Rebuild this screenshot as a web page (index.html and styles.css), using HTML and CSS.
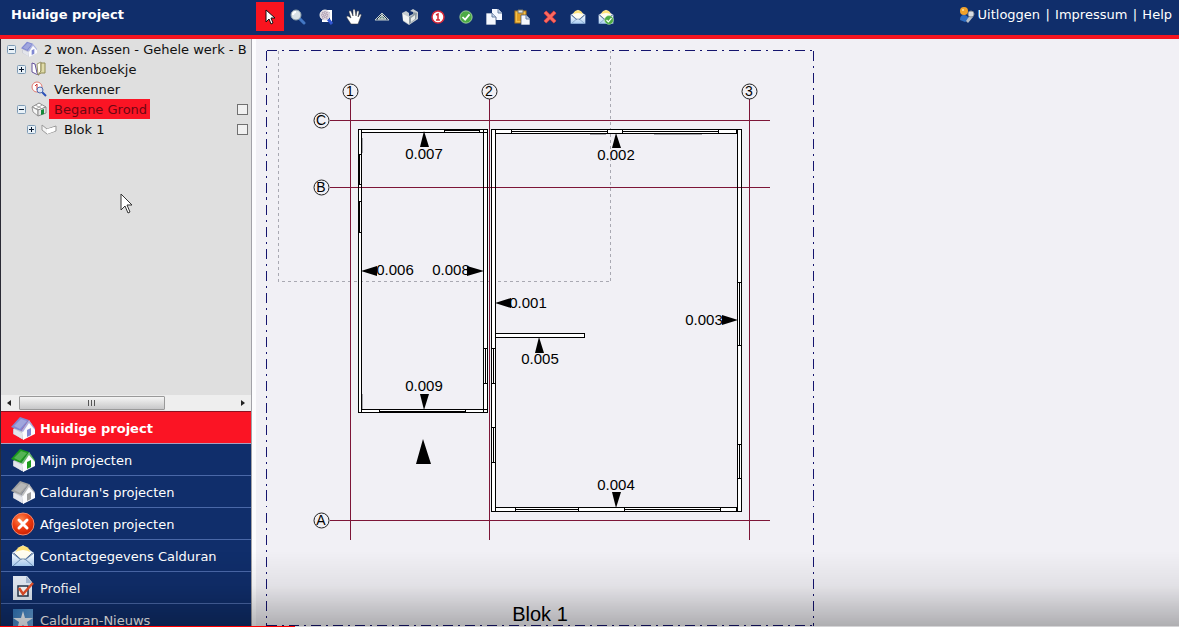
FILE: index.html
```html
<!DOCTYPE html>
<html lang="nl">
<head>
<meta charset="utf-8">
<title>Huidige project</title>
<link rel="stylesheet" href="styles.css">
</head>
<body>
<svg class="defs" aria-hidden="true">
  <defs>
    <linearGradient id="env" x1="0" y1="0" x2="0" y2="1"><stop offset="0" stop-color="#fff"/><stop offset="1" stop-color="#a9cdf3"/></linearGradient>
    <radialGradient id="redball" cx=".4" cy=".3" r=".8"><stop offset="0" stop-color="#ff8a50"/><stop offset=".5" stop-color="#f03c10"/><stop offset="1" stop-color="#c01800"/></radialGradient>
    <linearGradient id="star" x1="0" y1="0" x2="1" y2="1"><stop offset="0" stop-color="#2f74b8"/><stop offset="1" stop-color="#7db4e6"/></linearGradient>
    <symbol id="house" viewBox="0 0 24 24">
      <path d="M2 13l3-2 8 5v8L2 18z" fill="#c4c7d2"/>
      <path d="M3 13l8 4v6l-8-5z" fill="#e3e5ec"/>
      <path d="M11 14l7-10 6 9v5l-12 6z" fill="#fbfbfd"/>
      <path d="M0 11L9 1l9 3-8 11z" fill="currentColor"/>
      <path d="M3 10l7-7 6 2-7 8z" fill="#fff" opacity=".25"/>
      <path d="M18 4l6 8v2l-6-7-6 9-2-1z" fill="currentColor" opacity=".65"/>
      <path d="M16 14l4-2v7l-4 2z" fill="currentColor"/>
    </symbol>
    <symbol id="mail" viewBox="0 0 24 24">
      <path d="M1 9l11-8 11 8z" fill="#dfe8f4"/>
      <path d="M5 8q1-6 7-6t7 6l-5 5h-4z" fill="#ffe27a"/>
      <path d="M3 9q9-6 18 0l-9 8z" fill="#fffdf0"/>
      <path d="M1 9h1l8 7h4l8-7h1v13H1z" fill="url(#env)"/>
      <path d="M2 22l8-7h4l8 7M1 9l9 7M23 9l-9 7" fill="none" stroke="#6f92b8"/>
    </symbol>
    <symbol id="check" viewBox="0 0 16 16">
      <circle cx="8" cy="8" r="7" fill="#4dab45" stroke="#a9dca0"/>
      <path d="M4 8l3 3 5-6" fill="none" stroke="#fff" stroke-width="2"/>
    </symbol>
    <symbol id="page" viewBox="0 0 10 11">
      <path d="M0 0h6l4 4v7H0z" fill="#f4f8ff"/><path d="M6 0v4h4" fill="#c3d3e8" stroke="#6880a4"/>
    </symbol>
    <symbol id="plus" viewBox="0 0 9 9"><rect x=".5" y=".5" width="8" height="8" rx="1" fill="#e8f1f8" stroke="#7e9bb5"/><path d="M2 4h5v1H2zM4 2h1v5H4z" fill="#0a1a30"/></symbol>
    <symbol id="minus" viewBox="0 0 9 9"><rect x=".5" y=".5" width="8" height="8" rx="1" fill="#e8f1f8" stroke="#7e9bb5"/><path d="M2 4h5v1H2z" fill="#0a1a30"/></symbol>
  </defs>
</svg>

<header class="topbar">
  <h1 class="topbar-title">Huidige project</h1>
  <div class="toolbar" role="toolbar" aria-label="Gereedschap">
    <button class="tool tool-active" aria-label="Selecteren"><svg viewBox="0 0 16 16"><path d="M4 1v12l3-3 2 5 2-1-2-5h4z" fill="#fff" stroke="#111"/></svg></button>
    <button class="tool" aria-label="Zoomen"><svg viewBox="0 0 16 16"><path d="M10 10l4 4" stroke="#4377c4" stroke-width="3" stroke-linecap="round"/><circle cx="6" cy="6" r="5" fill="#d9e2e6" stroke="#8fa2ad"/><path d="M3 6q0-3 3-3" fill="none" stroke="#fff" stroke-width="2"/></svg></button>
    <button class="tool" aria-label="Zoom venster"><svg viewBox="0 0 16 16"><path d="M9 2h4v10H4" fill="none" stroke="#fff" stroke-width="2"/><path d="M10 10l4 5" stroke="#3155d2" stroke-width="3"/><circle cx="7" cy="6" r="5" fill="#dcd0dc" stroke="#eee"/><path d="M4 4h6M3 6h8M4 8h6M5 3v7M7 2v8M9 3v7" stroke="#a59aaa" stroke-dasharray="1 1"/></svg></button>
    <button class="tool" aria-label="Verschuiven"><svg viewBox="0 0 16 16"><path d="M5 15l-4-6q-1-2 1-2l3 2-2-6q0-2 2-1l2 5V1q1-2 2 0l1 6 1-5q2-1 2 1l-1 5 2-3q2 0 1 2l-3 8z" fill="#fff" stroke="#333" stroke-width=".5"/></svg></button>
    <button class="tool" aria-label="Aanzicht"><svg viewBox="0 0 16 16"><path d="M1 11L8 4l7 7z" fill="#142b50" stroke="#c3cfcf"/><path d="M4 10l4-4 4 4zM8 5v5" fill="#53777a" stroke="#dde5d8"/></svg></button>
    <button class="tool" aria-label="3D model"><svg viewBox="0 0 16 16"><path d="M0 4l4-2 3 2v3l4-2V3L8 2l3-2 5 3v7l-9 6-6-4z" fill="#c6cdd0"/><path d="M1 5l6 3v7l-6-4z" fill="#f3f5f3"/><path d="M7 8l4-2V3l4 1-1 6-7 5z" fill="#8d9ba3"/><path d="M9 9l4-3v4l-4 3z" fill="#e8ecea"/></svg></button>
    <button class="tool" aria-label="Maatvoering"><svg viewBox="0 0 16 16"><circle cx="8" cy="8" r="6" fill="#fff" stroke="#d8293a" stroke-width="1.5"/><path d="M6 6l2-1v6M6 11h4" fill="none" stroke="#d32b31" stroke-width="1.5"/></svg></button>
    <button class="tool" aria-label="Akkoord"><svg><use href="#check" x="1" y="1" width="14" height="14"/></svg></button>
    <button class="tool" aria-label="Kopiëren"><svg viewBox="0 0 16 16"><use href="#page" x="6" y="0" width="10" height="11"/><path d="M0 4h6l4 4v8H0z" fill="#f4f8ff" stroke="#183468" stroke-width=".7"/><path d="M6 4v4h4" fill="#c3d3e8" stroke="#6880a4"/></svg></button>
    <button class="tool" aria-label="Plakken"><svg viewBox="0 0 16 16"><rect x="1" y="2" width="11" height="12" fill="#f4c14a" stroke="#b47716"/><path d="M3 4h7v8H3z" fill="#e09d23"/><path d="M4 1h5v3H4z" fill="#e3e6ea" stroke="#776"/><path d="M7 6h5l4 4v6H7z" fill="#f4f8ff" stroke="#34486b" stroke-width=".7"/><path d="M12 6v4h4" fill="#c3d3e8" stroke="#6880a4"/></svg></button>
    <button class="tool" aria-label="Verwijderen"><svg viewBox="0 0 16 16"><path d="M3 3l10 10M13 3L3 13" stroke="#b71f2c" stroke-width="4"/><path d="M3 3l10 10M13 3L3 13" stroke="#fa6a60" stroke-width="3"/></svg></button>
    <button class="tool" aria-label="Bericht"><svg><use href="#mail"/></svg></button>
    <button class="tool" aria-label="Bericht verzonden"><svg viewBox="0 0 16 16"><use href="#mail" width="16" height="16"/><use href="#check" x="6" y="6" width="10" height="10"/></svg></button>
  </div>
  <nav class="account">
    <svg class="icon16" viewBox="0 0 16 16" aria-hidden="true"><path d="M1 13q0-5 4-5t5 5l-4 2z" fill="#2e6cc0"/><circle cx="5" cy="4" r="4" fill="#f0a22c"/><circle cx="4" cy="3" r="1" fill="#ffe09a"/><path d="M11 8l-4 6 2 2 5-6z" fill="#b9bfc6"/><circle cx="12" cy="7" r="3" fill="#d9dde2" stroke="#8a9098"/></svg>
    <a href="#">Uitloggen</a><span>|</span><a href="#">Impressum</a><span>|</span><a href="#">Help</a>
  </nav>
</header>

<main class="workspace">
  <aside class="sidebar">
    <div class="tree-panel">
      <ul class="tree">
        <li class="node level-1"><svg class="toggle"><use href="#minus"/></svg><svg class="icon16 house-blue"><use href="#house"/></svg><span class="label">2 won. Assen - Gehele werk - B</span></li>
        <li class="node level-2"><svg class="toggle"><use href="#plus"/></svg><svg class="icon16" viewBox="0 0 16 16"><path d="M1 2l3 1 2 9 2 2-3-1-4-2z" fill="#fff" stroke="#65529a"/><path d="M6 3l4-2v10l-3 3z" fill="#fffef0" stroke="#9b9570"/><path d="M10 2h4v10h-4l-3 2 3-4z" fill="#e0dba9" stroke="#8f8a54"/></svg><span class="label label-book">Tekenboekje</span></li>
        <li class="node level-2"><span class="toggle"></span><svg class="icon16" viewBox="0 0 16 16"><circle cx="6" cy="6" r="5" fill="#fff" stroke="#e07a72"/><path d="M4 5l2-2v6" fill="none" stroke="#d0302c"/><path d="M11 11l4 4" stroke="#2a50b8" stroke-width="2"/><circle cx="9" cy="9" r="3" fill="#dbe8fb" fill-opacity=".8" stroke="#4d6bb0"/></svg><span class="label">Verkenner</span></li>
        <li class="node level-2"><svg class="toggle"><use href="#minus"/></svg><svg class="icon16" viewBox="0 0 16 16"><path d="M1 6l7-4 7 4-7 3z" fill="#fff" stroke="#8b8b8b"/><path d="M1 6l6 3v6l-5-4z" fill="#f6f6f6" stroke="#999"/><path d="M7 9l8-3v6l-8 3z" fill="#e5e5e5" stroke="#8d8d8d"/><path d="M4 4l6 3M11 4L5 8" stroke="#aaa"/><path d="M10 9l3-1v5l-3 1z" fill="#15893a"/></svg><label class="label label-selected" for="pick-floor">Begane Grond</label><input class="pick" type="checkbox" id="pick-floor"></li>
        <li class="node level-3"><svg class="toggle"><use href="#plus"/></svg><svg class="icon16" viewBox="0 0 16 16"><path d="M1 4l5 4 9-3v5l-9 3-5-4z" fill="#f4f4f4" stroke="#9a9a9a"/><path d="M6 8v5l8-3V6z" fill="#fff"/></svg><label class="label" for="pick-block">Blok 1</label><input class="pick" type="checkbox" id="pick-block"></li>
      </ul>
      <svg class="pointer" viewBox="0 0 13 21" aria-hidden="true"><path d="M1 1v16l4-4 3 7 2-1-3-7h5z" fill="#fff" stroke="#333"/></svg>
    </div>
    <div class="scrollbar" aria-hidden="true">
      <svg class="scroll-arrow" viewBox="0 0 4 6"><path d="M4 0v6L0 3z"/></svg>
      <div class="scroll-track"><div class="scroll-thumb"><i></i><i></i><i></i></div></div>
      <svg class="scroll-arrow" viewBox="0 0 4 6"><path d="M0 0v6l4-3z"/></svg>
    </div>
    <nav class="menu">
      <a class="menu-item menu-item-active" href="#"><svg class="icon24 house-blue"><use href="#house"/></svg><span>Huidige project</span></a>
      <a class="menu-item" href="#"><svg class="icon24 house-green"><use href="#house"/></svg><span>Mijn projecten</span></a>
      <a class="menu-item" href="#"><svg class="icon24 house-gray"><use href="#house"/></svg><span>Calduran's projecten</span></a>
      <a class="menu-item" href="#"><svg class="icon24" viewBox="0 0 24 24"><circle cx="12" cy="12" r="11" fill="url(#redball)" stroke="#f98a6c"/><path d="M8 8l8 8M16 8l-8 8" stroke="#fff" stroke-width="3" stroke-linecap="round"/></svg><span>Afgesloten projecten</span></a>
      <a class="menu-item" href="#"><svg class="icon24"><use href="#mail"/></svg><span>Contactgegevens Calduran</span></a>
      <a class="menu-item" href="#"><svg class="icon24" viewBox="0 0 24 24"><path d="M2 0h14l5 6v18H2z" fill="#e7eff9"/><path d="M15 0l6 7h-6z" fill="#aabfda"/><path d="M7 10h10v10H7z" fill="#fff" stroke="#27384f" stroke-width="1.5"/><path d="M8 12l4 6L22 7" fill="none" stroke="#e9502a" stroke-width="2.5"/></svg><span>Profiel</span></a>
      <a class="menu-item" href="#"><svg class="icon24" viewBox="0 0 24 24"><path d="M2 1h20v22H2z" fill="url(#star)"/><path d="M12 3l2 7h8l-6 4 2 8-6-5-6 5 2-8-6-4h8z" fill="#f4f9ff"/></svg><span>Calduran-Nieuws</span></a>
    </nav>
  </aside>

  <section class="canvas" aria-label="Plattegrond">
    <svg class="plan" width="570" height="588" viewBox="256 39 570 588">
      <g transform="translate(.5 .5)" class="lines">
        <path class="page-border" d="M266 50V625M813 50V625M266 50H813M266 625H813"/>
        <path class="print-area" d="M278 50V281H610V50"/>
        <path class="wall-fill" d="M358 129h129v283h-129zM361 132v277h122v-277zM491 129h250v382h-250zM495 133v374h242v-374zM495 333h89v4h-89z" fill-rule="evenodd"/>
        <path class="axis" d="M350 98V539M489 98V539M749 98V539M329 120H769M329 187H769M329 520H769"/>
        <path class="wall" d="M358 129h129v283h-129zM361 129v283M483 129v283M361 132h126M361 409h126"/>
        <path class="wall" d="M491 129h250v382h-250zM495 129v382M737 129v382M495 133h242M495 507h242M495 333h89v4h-89"/>
        <path class="wall" d="M511 129v4M511 131h96v-2v4M622 129v4M622 131h96v-2v4M736 129v4M736 507v4M515 507v4M515 509h63v-2v4M624 507v4M624 509h96v-2v4"/>
        <path class="wall" d="M483 348h4M485 348v35M483 383h4M491 348h4M493 348v35M491 383h4M491 427h4M493 427v35M491 462h4M737 282h4M739 282v63M737 345h4M737 444h4M739 444v34M737 478h4"/>
        <path class="wall" d="M444 130h35M444 129v3M479 129v3M379 409v3M379 411h86M465 409v3M358 154h3M359 154v30M358 184h3M358 201h3M359 201v31M358 232h3"/>
        <path class="shade" d="M362 137v15M362 393v15M589 134h16M653 134h48"/>
      </g>
      <g class="bubbles">
        <circle cx="350" cy="91" r="7.5"/><circle cx="489" cy="91" r="7.5"/><circle cx="749" cy="91" r="7.5"/>
        <circle cx="321" cy="120" r="7.5"/><circle cx="321" cy="187" r="7.5"/><circle cx="321" cy="520" r="7.5"/>
      </g>
      <path class="arrows" d="M424 131l5 16h-9zM616 133l5 15h-9zM361 271l16-5v10zM484 271l-17-5v10zM495 303l16-5v10zM738 320l-16-5v10zM539 337l5 16h-9zM424 410l5-16h-9zM616 508l5-16h-9zM423 439l8 25h-15z"/>
      <g class="marks">
        <text x="350" y="96">1</text><text x="489" y="96">2</text><text x="749" y="96">3</text>
        <text x="321" y="125">C</text><text x="321" y="192">B</text><text x="321" y="525">A</text>
      </g>
      <g class="tags">
        <text x="424" y="159">0.007</text><text x="616" y="160">0.002</text>
        <text x="395" y="275">0.006</text><text x="451" y="275">0.008</text>
        <text x="528" y="308">0.001</text><text x="704" y="325">0.003</text>
        <text x="540" y="364">0.005</text><text x="424" y="391">0.009</text>
        <text x="616" y="490">0.004</text>
      </g>
      <text class="block-name" x="540" y="621">Blok 1</text>
    </svg>
  </section>
</main>
<div class="player-fade"></div>
<div class="player-progress"><div class="player-played"></div></div>
</body>
</html>
```

FILE: styles.css
```css
* { box-sizing: border-box; }
body {
  margin: 0;
  height: 100vh;
  display: flex;
  flex-direction: column;
  overflow: hidden;
  background: #f1f0f5;
  font: 13px/20px "DejaVu Sans", sans-serif;
  color: #111;
}
.defs { position: absolute; width: 0; height: 0; }
a { color: inherit; text-decoration: none; }

.topbar {
  flex: none;
  display: flex;
  height: 39px;
  background: #102e6b;
  border-bottom: 4px solid #f5141f;
  color: #fff;
}
.topbar-title { width: 256px; margin: 0; padding: 5px 0 0 11px; font-size: 13px; line-height: 20px; }
.toolbar { display: flex; padding-top: 2px; }
.tool {
  display: flex;
  align-items: center;
  justify-content: center;
  width: 28px;
  height: 29px;
  padding: 0;
  border: 0;
  background: none;
}
.tool-active { background: #f9141f; }
.tool svg, .icon16 { width: 16px; height: 16px; flex: none; fill: none; }
.account { display: flex; height: 30px; margin-left: auto; padding-right: 7px; align-items: center; }
.account a:first-of-type { margin-left: 3px; }
.account span { width: 15px; text-align: center; }

.workspace { flex: 1; min-height: 0; display: flex; }
.sidebar {
  flex: none;
  display: flex;
  flex-direction: column;
  width: 252px;
  margin-bottom: -9px;
  border-left: 1px solid #2a2a35;
  border-right: 1px solid #a2a2a8;
  background: #dfdfdf;
}
.tree-panel { position: relative; flex: 1; min-height: 0; overflow: hidden; }
.tree { margin: 0; padding: 0; list-style: none; }
.node { display: flex; align-items: center; height: 20px; white-space: nowrap; }
.level-1 { padding-left: 6px; }
.level-2 { padding-left: 16px; }
.level-3 { padding-left: 26px; }
.toggle { flex: none; width: 9px; height: 9px; margin-right: 5px; }
.label { margin-left: 2px; padding: 2px 3px 0 5px; line-height: 18px; }
.label-book { padding-left: 7px; }
.label-selected { background: #fb1424; color: #6d0612; }
.pick {
  appearance: none;
  width: 11px;
  height: 11px;
  margin: 0 3px 0 auto;
  border: 1px solid #707070;
  background: #f0f0f0;
}
.pointer { position: absolute; left: 119px; top: 154px; width: 13px; height: 21px; }

.house-blue { color: #8088d2; }
.house-green { color: #1c9a1c; }
.house-gray { color: #a0a0a0; }

.scrollbar { flex: none; display: flex; align-items: center; height: 16px; padding: 0 6px; background: #eee; }
.scroll-arrow { flex: none; width: 4px; height: 6px; fill: #222; }
.scroll-track { flex: 1; height: 14px; padding: 0 8px; }
.scroll-thumb {
  display: flex;
  align-items: center;
  justify-content: center;
  gap: 2px;
  width: 68%;
  height: 14px;
  border: 1px solid #999;
  border-radius: 1px;
  background: linear-gradient(#f4f4f4, #dedede 50%, #c7c7c9);
}
.scroll-thumb i { width: 1px; height: 6px; background: #555; }

.menu { flex: none; border-top: 1px solid #8c1020; background: #102e6b; color: #fff; }
.menu-item {
  display: flex;
  align-items: center;
  gap: 5px;
  height: 32px;
  padding-left: 10px;
  border-bottom: 1px solid #4a68a8;
}
.menu-item span { padding-top: 2px; }
.menu-item-active { background: #fb1424; font-weight: bold; border-bottom-color: #a8a0c0; }
.icon24 { width: 24px; height: 24px; flex: none; }

.canvas { flex: 1; min-width: 0; overflow: hidden; border-left: 4px solid #fcfcfe; }
.plan { display: block; font-family: "Liberation Sans", sans-serif; text-anchor: middle; }
.lines { fill: none; shape-rendering: crispEdges; }
.page-border { stroke: #14146e; stroke-dasharray: 10 5 2 5; }
.print-area { stroke: #a9a9b2; stroke-dasharray: 3 3; }
.wall-fill { fill: #fff; }
.wall { stroke: #000; }
.axis { stroke: #7d1537; }
.shade { stroke: #a5a5ab; }
.bubbles { fill: none; stroke: #222; transform: translate(.5px, .5px); }
.marks { font-size: 14px; }
.tags { font-size: 15px; }
.block-name { font-size: 20px; }

.player-fade {
  position: fixed;
  inset: auto 0 0;
  height: 76px;
  background: linear-gradient(rgba(0, 0, 0, 0), rgba(0, 0, 0, .06) 45%, rgba(0, 0, 0, .28));
  pointer-events: none;
}
.player-progress { position: fixed; inset: auto 0 0; height: 1px; background: #d4d4d6; }
.player-played { width: 25%; height: 1px; background: #f00; }
```
